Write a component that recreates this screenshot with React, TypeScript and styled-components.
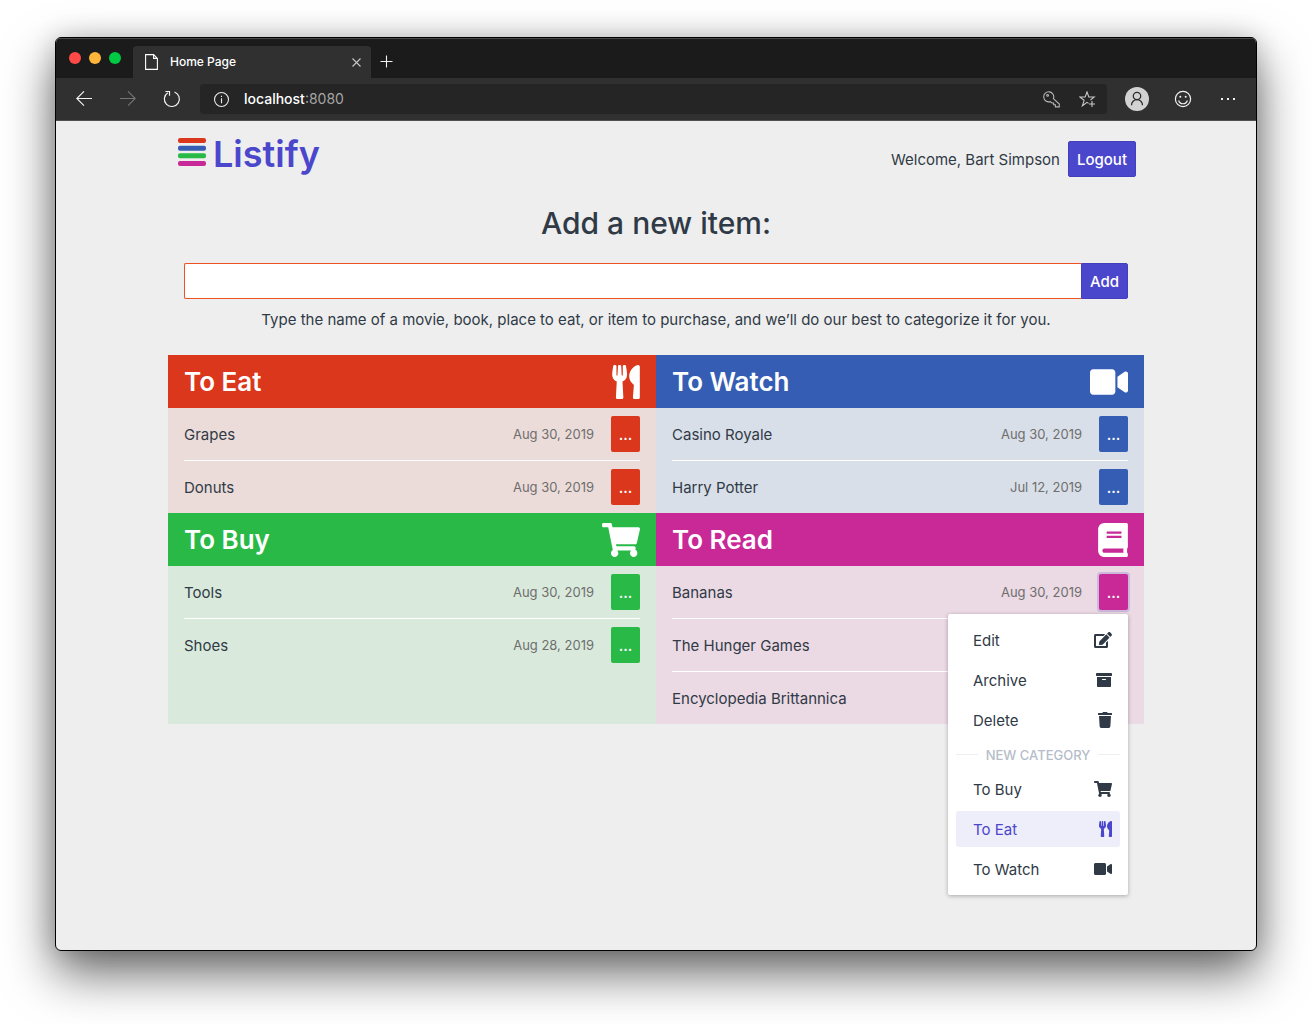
import React from 'react';
import styled, { createGlobalStyle } from 'styled-components';
import {
  FaUtensils,
  FaVideo,
  FaShoppingCart,
  FaBook,
  FaEdit,
  FaArchive,
  FaTrash,
} from 'react-icons/fa';

const GlobalStyle = createGlobalStyle`
  *, *::before, *::after { box-sizing: border-box; }
  body {
    margin: 0;
    background: #fff;
    color: #303a46;
    font-family: Inter, "Liberation Sans", sans-serif;
    font-size: 15px;
    line-height: 25px;
  }
  button, input { font: inherit; }
  button { cursor: pointer; }
  h1, h2, ul { margin: 0; padding: 0; }
  ul { list-style: none; }
`;

const Desktop = styled.div`
  min-height: 100vh;
  padding: 37px 55px 73px;
  display: flex;
`;

const Window = styled.div`
  flex: 1;
  min-width: 0;
  display: flex;
  flex-direction: column;
  border: 1px solid #000;
  border-radius: 6px;
  background: #eee;
  overflow: hidden;
  box-shadow: 0 22px 50px rgba(0, 0, 0, 0.6), 0 0 24px rgba(0, 0, 0, 0.16);
`;

/* Browser chrome */

const TabStrip = styled.div`
  display: flex;
  align-items: flex-end;
  height: 40px;
  padding-left: 13px;
  background: #1b1b1b;
  box-shadow: inset 0 1px 0 #4a4a4a;
`;

const Lights = styled.div`
  display: flex;
  gap: 8px;
  align-self: center;
  margin-right: 12px;
`;

const Light = styled.span<{ $color: string }>`
  width: 12px;
  height: 12px;
  border-radius: 50%;
  background: ${(p) => p.$color};
`;

const Tab = styled.div`
  display: flex;
  align-items: center;
  width: 238px;
  height: 32px;
  padding: 0 8px 0 12px;
  border-radius: 4px 4px 0 0;
  background: #303030;
  color: #fff;
  font-size: 12px;
  font-weight: 500;
  line-height: 24px;
`;

const TabTitle = styled.span`
  flex: 1;
  margin-left: 12px;
`;

const ChromeButton = styled.button<{ $dim?: boolean }>`
  display: flex;
  align-items: center;
  justify-content: center;
  flex: none;
  width: 32px;
  height: 32px;
  padding: 0;
  border: 0;
  background: none;
  color: ${(p) => (p.$dim ? '#747474' : '#f2f2f2')};
`;

const TabClose = styled(ChromeButton)`
  width: 14px;
  color: #c4c4c4;
`;

const Toolbar = styled.div`
  display: flex;
  align-items: center;
  height: 43px;
  padding: 0 11px 0 12px;
  background: #303030;
  border-bottom: 1px solid #505050;
`;

const NavButtons = styled.div`
  display: flex;
  gap: 12px;
  margin-right: 12px;
`;

const AddressBar = styled.div`
  flex: 1;
  min-width: 0;
  display: flex;
  align-items: center;
  height: 30px;
  padding: 0 4px 0 13px;
  border-radius: 4px;
  background: #252525;
  color: #ececec;
`;

const Address = styled.span`
  flex: 1;
  margin-left: 14px;
  color: #a6a6a6;
  font-size: 14px;
  line-height: 24px;
`;

const Host = styled.span`
  color: #fff;
  font-weight: 500;
`;

const AddressActions = styled.div`
  display: flex;
  gap: 4px;
`;

const ToolbarActions = styled.div`
  display: flex;
  gap: 14px;
  margin-left: 14px;
`;

/* Page */

const Page = styled.main`
  width: 100%;
  max-width: 976px;
  margin: 0 auto;
`;

const Header = styled.header`
  display: flex;
  align-items: center;
  justify-content: space-between;
  height: 76px;
  padding: 0 8px 0 10px;
`;

const Logo = styled.h1`
  display: flex;
  align-items: center;
  gap: 7px;
  margin-bottom: 10px;
  color: #4b47cc;
  font-size: 36px;
  font-weight: 600;
  line-height: 48px;
`;

const LogoBars = styled.svg`
  display: block;
  margin-bottom: 4px;
`;

const Account = styled.div`
  display: flex;
  align-items: center;
  gap: 8px;
`;

const PrimaryButton = styled.button<{ $attached?: boolean }>`
  height: 36px;
  padding: 0 8px;
  border: 1px solid #443fbd;
  border-radius: ${(p) => (p.$attached ? '0 2px 2px 0' : '2px')};
  background: #4b47cc;
  color: #fff;
  font-weight: 500;
`;

const AddForm = styled.form`
  display: flex;
  flex-direction: column;
  align-items: stretch;
  padding: 0 16px;
  margin-bottom: 23px;
  text-align: center;
`;

const FormLabel = styled.label`
  font-size: 30px;
  font-weight: 500;
  line-height: 40px;
  margin: 6px 0 20px;
`;

const InputRow = styled.div`
  display: flex;
  margin-bottom: 8px;
`;

const TextInput = styled.input`
  flex: 1;
  min-width: 0;
  height: 36px;
  padding: 0 8px;
  border: 1px solid #ee5223;
  border-right: 0;
  border-radius: 2px 0 0 2px;
  background: #fff;
  outline: none;
`;

const Hint = styled.p`
  margin: 0;
`;

const Board = styled.div`
  display: grid;
  grid-template-columns: 1fr 1fr;
`;

const Panel = styled.section<{ $tint: string }>`
  background: ${(p) => p.$tint};
`;

const PanelHeader = styled.header<{ $color: string }>`
  display: flex;
  align-items: center;
  justify-content: space-between;
  height: 53px;
  padding: 0 16px;
  background: ${(p) => p.$color};
  color: #fff;
`;

const PanelTitle = styled.h2`
  font-size: 26px;
  font-weight: 600;
  line-height: 38px;
`;

const Glyph = styled.span<{ $width: number; $height: number }>`
  display: flex;

  svg {
    width: ${(p) => p.$width}px;
    height: ${(p) => p.$height}px;
  }
`;

const ItemList = styled.ul`
  padding: 0 16px;
`;

const Item = styled.li`
  display: flex;
  align-items: center;
  padding: 8px 0;

  & + & {
    border-top: 1px solid #fff;
  }
`;

const ItemName = styled.span`
  flex: 1;
`;

const ItemDate = styled.time`
  margin-right: 17px;
  color: #6e6e6e;
  font-size: 13px;
  line-height: 24px;
`;

const ItemAction = styled.div`
  position: relative;
`;

const MoreButton = styled.button<{ $color: string; $focused?: boolean }>`
  display: block;
  width: 29px;
  height: 36px;
  padding: 0;
  border: 0;
  border-radius: 2px;
  background: ${(p) => p.$color};
  box-shadow: ${(p) => (p.$focused ? '0 0 0 2px #cbb8dc' : 'none')};
  color: #fff;
  font-weight: 500;
`;

const Menu = styled.div`
  position: absolute;
  z-index: 1;
  top: calc(100% + 4px);
  right: 0;
  display: flex;
  flex-direction: column;
  gap: 4px;
  width: 180px;
  padding: 8px;
  border-radius: 2px;
  background: #fff;
  box-shadow: 0 1px 4px rgba(0, 0, 0, 0.3);
`;

const MenuItem = styled.button<{ $active?: boolean }>`
  display: flex;
  align-items: center;
  justify-content: space-between;
  height: 36px;
  padding: 0 8px 0 17px;
  border: 0;
  border-radius: 3px;
  background: ${(p) => (p.$active ? '#eeedfa' : 'transparent')};
  color: ${(p) => (p.$active ? '#4b47cc' : '#303a46')};
`;

const MenuDivider = styled.div`
  display: flex;
  align-items: center;
  gap: 8px;
  height: 25px;
  color: #b5bdc8;
  font-size: 13px;
  font-weight: 500;
  line-height: 24px;
  white-space: nowrap;

  &::before,
  &::after {
    content: '';
    flex: 1;
    height: 1px;
    background: #eceef1;
  }
`;

type Entry = { name: string; date: string; open?: boolean };
type Category = {
  title: string;
  color: string;
  tint: string;
  icon: React.ReactNode;
  iconWidth: number;
  items: Entry[];
};

const categories: Category[] = [
  {
    title: 'To Eat',
    color: '#db371c',
    tint: '#ecdcd9',
    icon: <FaUtensils />,
    iconWidth: 28,
    items: [
      { name: 'Grapes', date: 'Aug 30, 2019' },
      { name: 'Donuts', date: 'Aug 30, 2019' },
    ],
  },
  {
    title: 'To Watch',
    color: '#355db4',
    tint: '#d9dfe8',
    icon: <FaVideo />,
    iconWidth: 38,
    items: [
      { name: 'Casino Royale', date: 'Aug 30, 2019' },
      { name: 'Harry Potter', date: 'Jul 12, 2019' },
    ],
  },
  {
    title: 'To Buy',
    color: '#29b947',
    tint: '#d9eadc',
    icon: <FaShoppingCart />,
    iconWidth: 38,
    items: [
      { name: 'Tools', date: 'Aug 30, 2019' },
      { name: 'Shoes', date: 'Aug 28, 2019' },
    ],
  },
  {
    title: 'To Read',
    color: '#c92997',
    tint: '#ebd9e4',
    icon: <FaBook />,
    iconWidth: 30,
    items: [
      { name: 'Bananas', date: 'Aug 30, 2019', open: true },
      { name: 'The Hunger Games', date: 'Aug 30, 2019' },
      { name: 'Encyclopedia Brittannica', date: 'Aug 30, 2019' },
    ],
  },
];

type Action = { label: string; icon: React.ReactNode; width: number; active?: boolean };

const itemActions: Action[] = [
  { label: 'Edit', icon: <FaEdit />, width: 18 },
  { label: 'Archive', icon: <FaArchive />, width: 16 },
  { label: 'Delete', icon: <FaTrash />, width: 14 },
];

const moveActions: Action[] = [
  { label: 'To Buy', icon: <FaShoppingCart />, width: 18 },
  { label: 'To Eat', icon: <FaUtensils />, width: 13, active: true },
  { label: 'To Watch', icon: <FaVideo />, width: 18 },
];

const line = {
  fill: 'none',
  stroke: 'currentColor',
  strokeWidth: 1.1,
  'aria-hidden': true,
} as const;

function BrowserChrome() {
  return (
    <>
      <TabStrip>
        <Lights>
          <Light $color="#ff4a48" />
          <Light $color="#ffb53a" />
          <Light $color="#00c944" />
        </Lights>
        <Tab>
          <svg width="13" height="16" viewBox="0 0 13 16" {...line}>
            <path d="M.6.6h8l3.8 3.8v11H.6zM8.6.6v3.8h3.8" />
          </svg>
          <TabTitle>Home Page</TabTitle>
          <TabClose aria-label="Close tab">
            <svg width="9" height="9" viewBox="0 0 9 9" {...line}>
              <path d="M.5.5l8 8M8.5.5l-8 8" />
            </svg>
          </TabClose>
        </Tab>
        <ChromeButton aria-label="New tab">
          <svg width="14" height="14" viewBox="0 0 14 14" {...line}>
            <path d="M6.5.5v12M.5 6.5h12" />
          </svg>
        </ChromeButton>
      </TabStrip>
      <Toolbar>
        <NavButtons>
          <ChromeButton aria-label="Back">
            <svg width="16" height="16" viewBox="0 0 16 16" {...line}>
              <path d="M16 7.5H1M8 .3L.8 7.5 8 14.7" />
            </svg>
          </ChromeButton>
          <ChromeButton aria-label="Forward" $dim>
            <svg width="16" height="16" viewBox="0 0 16 16" {...line}>
              <path d="M0 7.5h15M8 .3l7.2 7.2L8 14.7" />
            </svg>
          </ChromeButton>
          <ChromeButton aria-label="Reload">
            <svg width="18" height="18" viewBox="0 0 18 18" {...line} strokeWidth={1.2}>
              <path d="M11.5 2A7.5 7.5 0 1 1 4.8 2.7M2.4 1.5h4.1v4.3" />
            </svg>
          </ChromeButton>
        </NavButtons>
        <AddressBar>
          <svg width="17" height="17" viewBox="0 0 17 17" {...line}>
            <circle cx="8.5" cy="8.5" r="7" />
            <path d="M8.5 7.3v4.9M8.5 4.8v1.3" />
          </svg>
          <Address>
            <Host>localhost</Host>:8080
          </Address>
          <AddressActions>
            <ChromeButton aria-label="Saved passwords">
              <svg width="17" height="17" viewBox="0 0 17 17" {...line} stroke="#b4b4b4">
                <path d="M10.4 7.6A5 5 0 1 0 7.2 10.6L9 12h1.6v1.7h1.8v2.2h3.9v-2.8z" />
                <circle cx="4.6" cy="4.4" r=".9" />
              </svg>
            </ChromeButton>
            <ChromeButton aria-label="Add to favorites">
              <svg width="17" height="17" viewBox="0 0 17 17" {...line} stroke="#c8c8c8">
                <path d="M9.6 12.4L8 11.4 3.4 14.8l1.7-5.5L.8 6h5.4L8 .9 9.8 6h5.4L11.4 9.2M13 10v6M10 13h6" />
              </svg>
            </ChromeButton>
          </AddressActions>
        </AddressBar>
        <ToolbarActions>
          <ChromeButton aria-label="Profile">
            <svg width="24" height="24" viewBox="0 0 24 24" aria-hidden="true">
              <circle cx="12" cy="12" r="12" fill="#d2d2d2" />
              <g fill="none" stroke="#2a2a2a" strokeWidth="1.3">
                <circle cx="12" cy="9" r="3.7" />
                <path d="M6.5 18.2a5.5 5.5 0 0 1 11 0" />
              </g>
            </svg>
          </ChromeButton>
          <ChromeButton aria-label="Send feedback">
            <svg width="18" height="18" viewBox="0 0 18 18" {...line} strokeWidth={1.2}>
              <circle cx="9" cy="9" r="7.6" />
              <path d="M4.6 10.5a4.6 4.6 0 0 0 8.8 0" />
              <circle cx="6.3" cy="6.8" r="1" fill="currentColor" stroke="none" />
              <circle cx="11.7" cy="6.8" r="1" fill="currentColor" stroke="none" />
            </svg>
          </ChromeButton>
          <ChromeButton aria-label="Settings and more">
            <svg width="16" height="4" viewBox="0 0 16 4" fill="currentColor" aria-hidden="true">
              <path d="M0 1h2v2H0zM6 1h2v2H6zM12 1h2v2h-2z" />
            </svg>
          </ChromeButton>
        </ToolbarActions>
      </Toolbar>
    </>
  );
}

function MenuAction({ label, icon, width, active }: Action) {
  return (
    <MenuItem role="menuitem" $active={active}>
      {label}
      <Glyph $width={width} $height={16}>
        {icon}
      </Glyph>
    </MenuItem>
  );
}

function ItemMenu() {
  return (
    <Menu role="menu">
      {itemActions.map((a) => (
        <MenuAction key={a.label} {...a} />
      ))}
      <MenuDivider>NEW CATEGORY</MenuDivider>
      {moveActions.map((a) => (
        <MenuAction key={a.label} {...a} />
      ))}
    </Menu>
  );
}

export default function App() {
  return (
    <Desktop>
      <GlobalStyle />
      <Window>
        <BrowserChrome />
        <Page>
          <Header>
            <Logo>
              <LogoBars width="28" height="28" viewBox="0 0 28 28" aria-hidden="true">
                <rect width="28" height="5" rx="2" fill="#db371c" />
                <rect y="7.7" width="28" height="5" rx="2" fill="#355db4" />
                <rect y="15.3" width="28" height="5" rx="2" fill="#29b947" />
                <rect y="23" width="28" height="5" rx="2" fill="#c92997" />
              </LogoBars>
              Listify
            </Logo>
            <Account>
              <span>Welcome, Bart Simpson</span>
              <PrimaryButton>Logout</PrimaryButton>
            </Account>
          </Header>
          <AddForm onSubmit={(e) => e.preventDefault()}>
            <FormLabel htmlFor="new-item">Add a new item:</FormLabel>
            <InputRow>
              <TextInput id="new-item" type="text" />
              <PrimaryButton $attached>Add</PrimaryButton>
            </InputRow>
            <Hint>
              Type the name of a movie, book, place to eat, or item to purchase, and we’ll do our
              best to categorize it for you.
            </Hint>
          </AddForm>
          <Board>
            {categories.map((c) => (
              <Panel key={c.title} $tint={c.tint}>
                <PanelHeader $color={c.color}>
                  <PanelTitle>{c.title}</PanelTitle>
                  <Glyph $width={c.iconWidth} $height={34}>
                    {c.icon}
                  </Glyph>
                </PanelHeader>
                <ItemList>
                  {c.items.map((item) => (
                    <Item key={item.name}>
                      <ItemName>{item.name}</ItemName>
                      <ItemDate>{item.date}</ItemDate>
                      <ItemAction>
                        <MoreButton
                          $color={c.color}
                          $focused={item.open}
                          aria-label={`Actions for ${item.name}`}
                        >
                          ...
                        </MoreButton>
                        {item.open && <ItemMenu />}
                      </ItemAction>
                    </Item>
                  ))}
                </ItemList>
              </Panel>
            ))}
          </Board>
        </Page>
      </Window>
    </Desktop>
  );
}
